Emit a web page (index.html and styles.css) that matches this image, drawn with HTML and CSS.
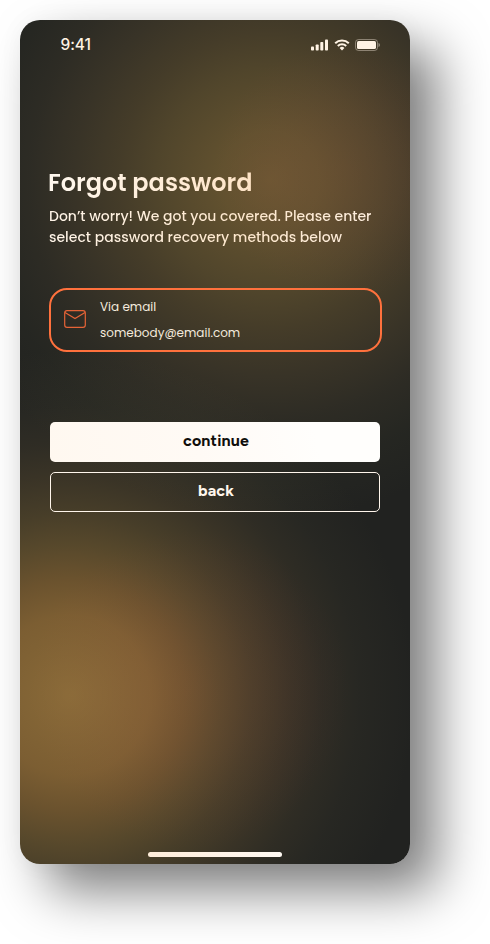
FILE: index.html
```html
<!DOCTYPE html>
<html lang="en">
<head>
<meta charset="utf-8">
<title>Forgot password</title>
<link rel="stylesheet" href="styles.css">
</head>
<body>
<main class="phone">
  <header class="status">
    <span class="time">9:41</span>
    <div class="indicators">
      <svg width="17" height="12" viewBox="0 0 17 12" fill="currentColor"><rect x="0" y="7.5" width="3" height="4" rx=".8"/><rect x="4.7" y="5.5" width="3" height="6" rx=".8"/><rect x="9.3" y="3" width="3" height="8.5" rx=".8"/><rect x="14" y=".5" width="3" height="11" rx=".8"/></svg>
      <svg width="16" height="12" viewBox="0 0 16 12" fill="none" stroke="currentColor" stroke-width="2"><path d="M1.2 4.2a9.7 9.7 0 0 1 13.6 0"/><path d="M3.8 7a6 6 0 0 1 8.4 0"/><path d="M5.6 8.9a3.5 3.5 0 0 1 4.8 0L8 11.4z" fill="currentColor" stroke="none"/></svg>
      <svg width="25" height="12" viewBox="0 0 25 12"><rect x=".5" y=".5" width="22" height="11" rx="3" fill="none" stroke="currentColor" opacity=".4"/><rect x="2" y="2" width="19" height="8" rx="1.6" fill="currentColor"/><path d="M23.5 4v4c.9-.3 1.4-1.1 1.4-2s-.5-1.700-1.400-2z" fill="currentColor" opacity=".45"/></svg>
    </div>
  </header>
  <section class="content">
    <h1>Forgot password</h1>
    <p class="intro">Don’t worry! We got you covered. Please enter<br>select password recovery methods below</p>
    <div class="method">
      <svg class="mail" width="22" height="18" viewBox="0 0 22 18" fill="none" stroke="currentColor" stroke-width="1.2"><rect x=".7" y=".7" width="20.600" height="16.600" rx="2.300"/><path d="M1 2.500l10 6 10-6"/></svg>
      <div class="details"><span>Via email</span><span>somebody@email.com</span></div>
    </div>
    <div class="actions">
      <button class="primary">continue</button>
      <button class="secondary">back</button>
    </div>
  </section>
  <div class="home"></div>
</main>
</body>
</html>
```
FILE: styles.css
```css
* { box-sizing: border-box; }
body { margin: 0; padding: 20px; height: 944px; background: #fff; overflow: hidden; }
.phone {
  width: 390px; height: 844px; border-radius: 20px;
  display: flex; flex-direction: column;
  color: #fff3e4; font-family: Poppins, Inter, sans-serif;
  background:
    radial-gradient(circle at 50px 675px, rgb(120,84,28) 0, rgb(104,69,21) 80px, rgb(85,56,16) 115px, rgb(62,44,13) 150px, rgb(44,32,10) 182px, rgb(28,20,7) 220px, rgb(16,12,5) 252px, rgb(7,6,3) 290px, #000 345px),
    radial-gradient(circle at 170px 670px, rgb(16,2,4) 0, rgb(11,1,3) 70px, #000 160px),
    radial-gradient(circle at 250px 160px, rgb(84,59,20) 0, rgb(74,54,17) 50px, rgb(55,41,13) 110px, rgb(41,30,10) 150px, rgb(27,20,8) 195px, rgb(14,11,5) 240px, rgb(5,5,2) 285px, #000 340px),
    radial-gradient(circle at 325px 150px, rgb(13,1,4) 0, rgb(9,1,3) 60px, #000 130px),
    linear-gradient(#212220, #212220);
  background-blend-mode: screen, screen, screen, screen, normal;
  box-shadow: 27px 27px 52px rgba(0,0,0,.5), 0 0 26px rgba(0,0,0,.04);
}
.status { display: flex; justify-content: space-between; align-items: center; height: 50px; padding: 0 29px 0 40.500px; }
.time { font: 500 15.500px/20px Inter, sans-serif; letter-spacing: -.05px; }
.indicators { display: flex; gap: 6px; align-items: center; }
.indicators svg:last-child { margin-left: -1px; margin-right: 1px; }
.content { padding: 94px 28px 0 29px; }
h1 {
  margin: 0; font-size: 24px; line-height: 38px; font-weight: 600; white-space: nowrap; margin-left: -1px;
  width: max-content; color: transparent;
  background: linear-gradient(90deg, #fff8ef, #ffe4c6); background-clip: text; -webkit-background-clip: text;
}
.intro {
  margin: 4px 0 0; font-size: 14px; line-height: 21px; font-weight: 500; white-space: nowrap;
  width: max-content; color: transparent;
  background: linear-gradient(90deg, #fff5e9, #fde7cc 60%, #fdeddd); background-clip: text; -webkit-background-clip: text;
}
.method { height: 64px; margin-top: 40px; border: 2px solid #ff713d; border-radius: 18px; display: flex; align-items: center; padding-left: 13px; gap: 14px; }
.mail { color: #e56337; margin-top: -2px; }
.details { display: flex; flex-direction: column; font-size: 12px; line-height: 26px; color: #f4eadd; }
.actions { display: flex; flex-direction: column; gap: 10px; margin: 70px 2px 0 1px; }
button { height: 40px; border-radius: 5px; padding: 0 2px 3px 4px; font: 700 16px/20px Figtree, Lato, sans-serif; letter-spacing: .15px; }
.primary { border: 0; color: #100e0b; background: linear-gradient(75deg, #fff8f0, #fffaf5 45%, #fffefc 80%); }
.secondary { border: 1px solid #fff6ec; color: #fff6ec; background: transparent; }
.home { width: 134px; height: 5px; border-radius: 3px; background: linear-gradient(90deg, #ffedda, #fff9f3); margin: auto auto 7px 128px; flex: none; }
```
